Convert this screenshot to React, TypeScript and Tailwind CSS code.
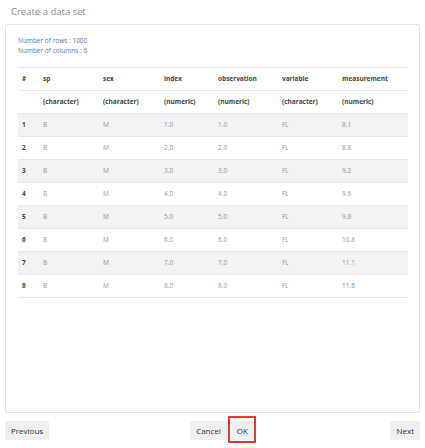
const columns = [
  { name: "sp", type: "(character)", w: "w-[60px]" },
  { name: "sex", type: "(character)", w: "w-[61px]" },
  { name: "index", type: "(numeric)", w: "w-[54px]" },
  { name: "observation", type: "(numeric)", w: "w-[64px]" },
  { name: "variable", type: "(character)", w: "w-[60px]" },
  { name: "measurement", type: "(numeric)", w: "w-[71px]" },
];

const measurements = ["8.1", "8.8", "9.2", "9.6", "9.8", "10.8", "11.1", "11.6"];

const rows = measurements.map((m, i) => ({
  id: i + 1,
  cells: ["B", "M", `${i + 1}.0`, `${i + 1}.0`, "FL", m],
}));

function Button({ label }: { label: string }) {
  return (
    <button className="block h-[19px] px-[6px] bg-[#efefef] rounded-[2px] text-[8px] text-[#333] leading-[19px]">
      {label}
    </button>
  );
}

export default function App() {
  return (
    <div
      className="w-[425px] h-[448px] bg-white flex flex-col"
      style={{ fontFamily: "'Open Sans', 'Noto Sans', sans-serif" }}
    >
      <div className="h-[24px] pl-[11px] pt-[5px] text-[9.5px] leading-[14px] text-[#8a8a8a]">
        Create a data set
      </div>

      <div className="mx-[5px] h-[389px] shrink-0 border border-[#e3e3e3] rounded-[2px] pl-[12px] pr-[11px] pt-[11px]">
        <div className="text-[6.5px] leading-[10px] text-[#5f7891]">
          <div>Number of rows : 1000</div>
          <div>Number of columns : 6</div>
        </div>

        <table className="mt-[11px] w-[390px] border-collapse text-[6.5px] table-fixed">
          <thead>
            <tr className="h-[23px] border-t border-b border-[#e6e6e6] text-[#444]">
              <th className="w-[20px] text-left pl-[4px] font-bold">#</th>
              {columns.map((c) => (
                <th key={c.name} className={`${c.w} text-left pl-[5px] font-bold`}>
                  {c.name}
                </th>
              ))}
            </tr>
            <tr className="h-[23px] border-b border-[#e6e6e6] text-[#444]">
              <th />
              {columns.map((c) => (
                <th key={c.name} className="text-left pl-[5px] font-bold">
                  {c.type}
                </th>
              ))}
            </tr>
          </thead>
          <tbody>
            {rows.map((r) => (
              <tr
                key={r.id}
                className={`h-[23px] border-b border-[#e8e8e8] ${r.id % 2 === 1 ? "bg-[#f2f2f2]" : "bg-white"}`}
              >
                <td className="pl-[4px] font-bold text-[#444]">{r.id}</td>
                {r.cells.map((v, j) => (
                  <td
                    key={j}
                    className={`pl-[5px] ${r.id === 8 && j === 5 ? "text-[#5f86b5]" : "text-[#999]"}`}
                  >
                    {v}
                  </td>
                ))}
              </tr>
            ))}
          </tbody>
        </table>
      </div>

      <div className="mt-[8px] px-[5px] flex items-start">
        <Button label="Previous" />
        <div className="ml-[141px] flex gap-[4px]">
          <Button label="Cancel" />
          <div className="relative flex">
            <Button label="OK" />
            <span className="absolute -top-[5px] -bottom-[3px] -left-[3px] -right-[2px] border-2 border-[#e53935] pointer-events-none" />
          </div>
        </div>
        <div className="ml-auto">
          <Button label="Next" />
        </div>
      </div>
    </div>
  );
}
